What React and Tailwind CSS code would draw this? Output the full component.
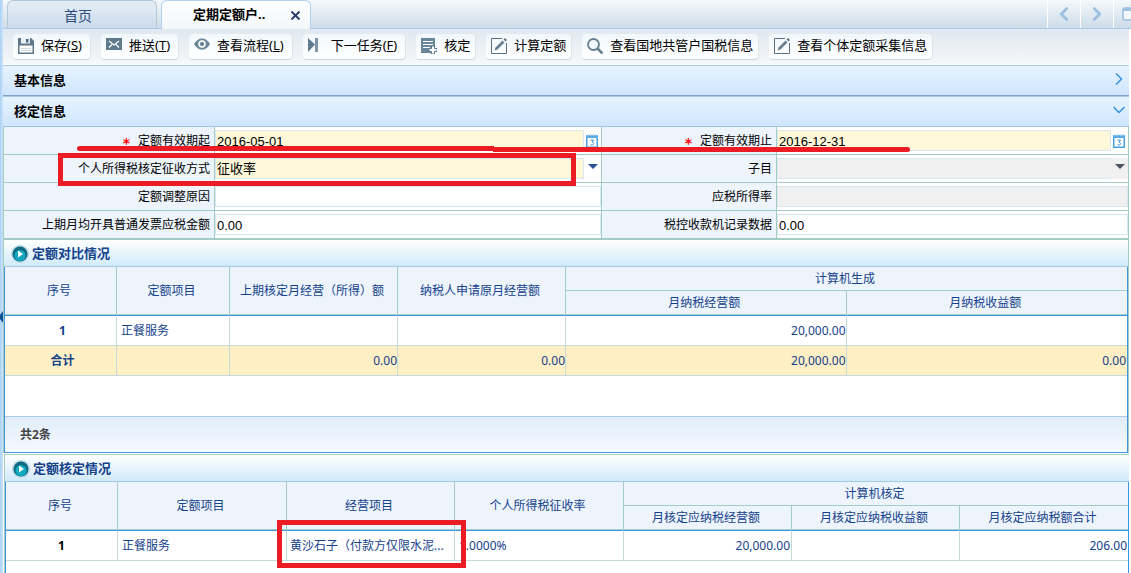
import { ChevronDown, ChevronLeft, ChevronRight } from "lucide-react";

function SaveIcon() {
  return (
    <svg viewBox="0 0 16 16" className="w-4 h-4 shrink-0">
      <path d="M0 0h13l3 3v13H0z" fill="#5f7689" />
      <path d="M1.500 7.500h13v7h-13z" fill="#fff" />
      <path d="M3 0h9v5.500H3z" fill="#e9f1f6" />
      <path d="M8 1h2.500v3.500H8z" fill="#4f677a" />
      <path d="M3 10.500h10M3 12.500h10" stroke="#cfdae2" />
    </svg>
  );
}

function MailIcon() {
  return (
    <svg viewBox="0 0 16 16" className="w-4 h-4 shrink-0">
      <path d="M0 0h16v12H0z" fill="#5f7b8d" />
      <path d="M3 3l5 4 5-4M3 9.500l3-3M13 9.500l-3-3" stroke="#fff" strokeWidth="1.200" fill="none" />
    </svg>
  );
}

function EyeIcon() {
  return (
    <svg viewBox="0 0 16 16" className="w-4 h-4 shrink-0">
      <path d="M0 6C4-1.500 12-1.500 16 6 12 13.500 4 13.500 0 6z" fill="#6a8799" />
      <circle cx="8" cy="6" r="3.800" fill="#fff" />
      <circle cx="8" cy="6" r="2" fill="#5b788b" />
    </svg>
  );
}

function NextIcon() {
  return (
    <svg viewBox="0 0 16 16" className="w-4 h-4 shrink-0">
      <path d="M0 0l7 6.500L0 14z" fill="#5f7b90" />
      <path d="M7 0h3v14H7z" fill="#7d97a8" />
    </svg>
  );
}

function CheckListIcon() {
  return (
    <svg viewBox="0 0 16 16" className="w-4 h-4 shrink-0">
      <path d="M0 0h14v15H0z" fill="#6a8799" />
      <path d="M2 3.500h10M2 6.500h10M2 9.500h7" stroke="#fff" />
      <path d="M10.500 8h3v2.500H16v3h-2.500V16h-3v-2.500H8v-3h2.500z" fill="#fff" stroke="#5f7b90" />
    </svg>
  );
}

function EditIcon() {
  return (
    <svg viewBox="0 0 16 16" className="w-4 h-4 shrink-0">
      <path d="M11 .5H.5v15h15V5" stroke="#5c7282" fill="none" />
      <path d="M3.500 12.500l1-3 7-7 2 2-7 7z" fill="#6b8191" />
      <path d="M12.500 1.500L14 0l2 2-1.500 1.500z" fill="#5c7282" />
    </svg>
  );
}

function SearchIcon() {
  return (
    <svg viewBox="0 0 16 16" className="w-4 h-4 shrink-0">
      <circle cx="6.500" cy="6.500" r="5.500" stroke="#64808f" strokeWidth="1.800" fill="#f2f8fb" />
      <path d="M10.500 10.500l5 5" stroke="#64808f" strokeWidth="2.600" />
    </svg>
  );
}

function CalendarIcon() {
  return (
    <svg viewBox="0 0 12 14" className="w-3 h-3.5 shrink-0">
      <path d="M.75 2.500h10.500v10.750H.75z" fill="#fff" stroke="#4a9fe0" strokeWidth="1.500" />
      <path d="M0 1h12v3H0z" fill="#5aaae6" />
      <path d="M2 0v2M4.500 0v2M7.500 0v2M10 0v2" stroke="#b9dcf5" />
      <path d="M4.500 6h3L6 8.300c2.300 0 2 3-.2 2.700L4.500 10.700" stroke="#3b94dc" fill="none" />
    </svg>
  );
}

function PlayIcon() {
  return (
    <svg viewBox="0 0 18 18" className="w-[18px] h-[18px] shrink-0">
      <circle cx="9" cy="9" r="9" fill="#b9d9e6" />
      <circle cx="9" cy="9" r="7.500" fill="#0d6a80" />
      <circle cx="9" cy="10.500" r="5.500" fill="#12a8bf" />
      <path d="M7 5.500l5 3.500-5 3.500z" fill="#fff" />
    </svg>
  );
}

function Arrow() {
  return (
    <svg viewBox="0 0 10 5" className="w-2.5 h-[5px] shrink-0">
      <path d="M0 0h10L5 5z" fill="currentColor" />
    </svg>
  );
}

const actions = [
  { icon: SaveIcon, label: "保存", hotkey: "S" },
  { icon: MailIcon, label: "推送", hotkey: "T" },
  { icon: EyeIcon, label: "查看流程", hotkey: "L" },
  { icon: NextIcon, label: "下一任务", hotkey: "F" },
  { icon: CheckListIcon, label: "核定" },
  { icon: EditIcon, label: "计算定额" },
  { icon: SearchIcon, label: "查看国地共管户国税信息" },
  { icon: EditIcon, label: "查看个体定额采集信息" },
];

function TabBar() {
  return (
    <nav className="flex h-[29px] border-b border-[#a9c8ec] bg-linear-to-b from-[#f4f9fb] to-[#cddce8] pl-1">
      <button className="w-[150px] mr-1 pr-2 pt-0.5 rounded-t-md border border-b-0 border-[#b4c8dc] bg-linear-to-b from-[#e6eef5] to-[#cbdcec] text-sm text-[#2c4a7c]">
        首页
      </button>
      <div className="flex items-center w-[150px] -mb-px pl-[31px] rounded-t-md border border-b-0 border-[#b3d0f0] bg-linear-to-b from-white to-[#f3f7fa]">
        <button className="text-[13px] font-bold whitespace-nowrap">定期定额户..</button>
        <button aria-label="关闭" className="ml-auto mr-2.5 text-[#2b4270]">
          <svg viewBox="0 0 9 9" className="w-[9px] h-[9px]">
            <path d="M.5.5l8 8M8.500.5l-8 8" stroke="currentColor" strokeWidth="2" />
          </svg>
        </button>
      </div>
      <div className="flex ml-auto text-[#9dbfe0]">
        <button aria-label="向左" className="flex items-center justify-center w-[33px] border-l border-white">
          <ChevronLeft size={22} strokeWidth={3} />
        </button>
        <button aria-label="向右" className="flex items-center justify-center w-[33px] border-l border-white">
          <ChevronRight size={22} strokeWidth={3} />
        </button>
        <button aria-label="窗口" className="flex items-center w-[18px] pl-2 overflow-hidden border-l border-white">
          <svg viewBox="0 0 16 14" className="w-4 h-3.5 shrink-0">
            <rect x="1" y="1" width="14" height="12" rx="2" fill="#f3f8fc" stroke="currentColor" strokeWidth="1.500" />
            <path d="M1 1h14v3H1z" fill="currentColor" />
          </svg>
        </button>
      </div>
    </nav>
  );
}

function Toolbar() {
  return (
    <div className="flex items-center gap-[11px] h-9 pl-2.5 border-b border-white bg-linear-to-b from-[#dfe8f0] to-[#f6f8fa]">
      {actions.map(({ icon: Icon, label, hotkey }) => (
        <button
          key={label}
          className={
            "flex items-center gap-[7px] h-[26px] pl-[5px] rounded-sm bg-linear-to-b from-[#f1f7fb] to-white border-b border-[#d3d7da] shadow-[1px_0_1px_#e0e3e6] text-[13px] text-black whitespace-nowrap " +
            (hotkey ? "pr-2" : "pr-[5px]")
          }
        >
          <Icon />
          <span>
            {label}
            {hotkey && <>(<u>{hotkey}</u>)</>}
          </span>
        </button>
      ))}
    </div>
  );
}

function PanelHeader({ title, open }) {
  const Icon = open ? ChevronDown : ChevronRight;
  return (
    <button
      className={
        "flex items-center justify-between w-full pl-[11px] border-t border-[#a8cbe8] bg-linear-to-b from-[#e7f3ff] to-[#cfe6fd] text-[13px] font-bold text-black " +
        (open ? "h-[30px]" : "h-[31px] border-b border-b-[#7da3c9]")
      }
    >
      {title}
      <Icon size={20} className="mb-1 text-[#3a97e3]" />
    </button>
  );
}

function Label({ id, required, children }) {
  return (
    <label
      htmlFor={id}
      className="flex items-center justify-end h-7 pr-1 border-r border-b border-[#a4ccc4] bg-[#edf4fc] text-xs text-black whitespace-nowrap"
    >
      {required && <span className="mr-2 pt-1 font-['DejaVu_Sans'] text-sm leading-none font-bold text-[#f00]">*</span>}
      {children}
    </label>
  );
}

const control = "flex-1 min-w-0 h-[21px] px-px pt-px border border-[#d9e8f0] text-[13px] text-black outline-none appearance-none font-['Liberation_Sans','Noto_Sans_CJK_SC',sans-serif] ";

function Cell({ last, children }) {
  return (
    <div className={"flex items-center h-7 border-b border-[#a4ccc4] bg-white" + (last ? "" : " border-r")}>
      {children}
    </div>
  );
}

function DateField({ id, value }) {
  return (
    <>
      <input id={id} defaultValue={value} className={control + "bg-[#fef8d9]"} />
      <button aria-label="选择日期" className="flex w-[17px] pt-px pl-0.5">
        <CalendarIcon />
      </button>
    </>
  );
}

function QuotaForm() {
  return (
    <form className="grid grid-cols-[211px_387fr_175px_351fr] border-t border-t-[#9fc6e6] border-b border-b-[#a4ccc4]">
      <Label id="start" required>定额有效期起</Label>
      <Cell><DateField id="start" value="2016-05-01" /></Cell>
      <Label id="end" required>定额有效期止</Label>
      <Cell last><DateField id="end" value="2016-12-31" /></Cell>

      <Label id="method">个人所得税核定征收方式</Label>
      <Cell>
        <select id="method" className={control + "bg-[#fef8d9] leading-[16px]"}>
          <option>征收率</option>
        </select>
        <span className="flex justify-center w-[17px] pb-1 text-[#2a4d94]"><Arrow /></span>
      </Cell>
      <Label id="item">子目</Label>
      <Cell last>
        <select id="item" disabled className={control + "border-r-0 bg-[#f0f0f0] opacity-100"} />
        <span className="flex items-center justify-center w-[17px] h-[21px] pb-1 bg-[#f0f0f0] text-[#4d5560]"><Arrow /></span>
      </Cell>

      <Label id="reason">定额调整原因</Label>
      <Cell><input id="reason" className={control} /></Cell>
      <Label id="rate">应税所得率</Label>
      <Cell last><input id="rate" disabled className={control + "bg-[#f0f0f0]"} /></Cell>

      <Label id="invoice">上期月均开具普通发票应税金额</Label>
      <Cell><input id="invoice" defaultValue="0.00" className={control} /></Cell>
      <Label id="register">税控收款机记录数据</Label>
      <Cell last><input id="register" defaultValue="0.00" className={control} /></Cell>
    </form>
  );
}

function SectionTitle({ children }) {
  return (
    <h2 className="flex items-center gap-[3px] h-[27px] pt-0.5 pl-[7px] border-b border-[#a3cae0] bg-linear-to-b from-white to-[#d0eaf9] text-[13px] font-bold text-[#15428b]">
      <PlayIcon />
      {children}
    </h2>
  );
}

function Th({ className = "", ...props }) {
  return (
    <th
      className={"h-6 py-0 pl-0 pr-[3px] border-b border-[#a4ccc8] bg-[#edf4fc] font-normal " + className}
      {...props}
    />
  );
}

function Td({ className = "", ...props }) {
  return <td className={"p-0 border-b border-[#c3dad8] truncate " + className} {...props} />;
}

const table = "w-full table-fixed border-separate border-spacing-0 text-xs text-[#15428b]";

function CompareTable() {
  return (
    <table className={table}>
      <colgroup>
        <col className="w-[112px]" />
        <col className="w-[113px]" />
        <col className="w-[168px]" />
        <col className="w-[168px]" />
        <col />
        <col />
      </colgroup>
      <thead>
        <tr>
          <Th rowSpan={2} className="border-r">序号</Th>
          <Th rowSpan={2} className="border-r">定额项目</Th>
          <Th rowSpan={2} className="border-r">上期核定月经营（所得）额</Th>
          <Th rowSpan={2} className="border-r">纳税人申请原月经营额</Th>
          <Th colSpan={2}>计算机生成</Th>
        </tr>
        <tr>
          <Th className="border-r">月纳税经营额</Th>
          <Th>月纳税收益额</Th>
        </tr>
      </thead>
      <tbody>
        <tr className="h-[31px] bg-white">
          <Td className="border-r border-t border-t-[#3f96de] text-center font-bold pl-1">1</Td>
          <Td className="border-r border-t border-t-[#3f96de] pl-1">正餐服务</Td>
          <Td className="border-r border-t border-t-[#3f96de]" />
          <Td className="border-r border-t border-t-[#3f96de]" />
          <Td className="border-r border-t border-t-[#3f96de] text-right">20,000.00</Td>
          <Td className="border-t border-t-[#3f96de]" />
        </tr>
        <tr className="h-[30px] bg-[#feefc5]">
          <Td className="border-r text-center font-bold pl-1">合计</Td>
          <Td className="border-r" />
          <Td className="border-r text-right">0.00</Td>
          <Td className="border-r text-right">0.00</Td>
          <Td className="border-r text-right">20,000.00</Td>
          <Td className="text-right pr-px">0.00</Td>
        </tr>
      </tbody>
    </table>
  );
}

function ApprovedTable() {
  return (
    <table className={table}>
      <colgroup>
        <col className="w-[112px]" />
        <col className="w-[169px]" />
        <col className="w-[168px]" />
        <col className="w-[169px]" />
        <col span={3} />
      </colgroup>
      <thead>
        <tr>
          <Th rowSpan={2} className="border-r">序号</Th>
          <Th rowSpan={2} className="border-r">定额项目</Th>
          <Th rowSpan={2} className="border-r">经营项目</Th>
          <Th rowSpan={2} className="border-r">个人所得税征收率</Th>
          <Th colSpan={3}>计算机核定</Th>
        </tr>
        <tr>
          <Th className="border-r">月核定应纳税经营额</Th>
          <Th className="border-r">月核定应纳税收益额</Th>
          <Th>月核定应纳税额合计</Th>
        </tr>
      </thead>
      <tbody>
        <tr className="h-[31px] bg-white">
          <Td className="border-r border-t border-t-[#3f96de] text-center font-bold text-black">1</Td>
          <Td className="border-r border-t border-t-[#3f96de] pl-1">正餐服务</Td>
          <Td className="border-r border-t border-t-[#3f96de] pl-[3px]">黄沙石子（付款方仅限水泥...</Td>
          <Td className="border-r border-t border-t-[#3f96de] pl-1">1.0000%</Td>
          <Td className="border-r border-t border-t-[#3f96de] text-right pr-px">20,000.00</Td>
          <Td className="border-r border-t border-t-[#3f96de]" />
          <Td className="border-t border-t-[#3f96de] text-right pr-px">206.00</Td>
        </tr>
      </tbody>
    </table>
  );
}

// red marker strokes drawn over the page
function Markers() {
  return (
    <div className="pointer-events-none">
      <div className="absolute left-[77px] top-[146px] w-[417px] h-[5px] rounded-l-full bg-[#ed1c24]" />
      <div className="absolute left-[493px] top-[147px] w-[417px] h-[5px] rounded-r-full bg-[#ed1c24]" />
      <div className="absolute left-[58px] top-[153px] w-[518px] h-[33px] border-5 border-[#ed1c24]" />
      <div className="absolute left-[277px] top-[520px] w-[189px] h-12 border-5 border-[#ed1c24]" />
    </div>
  );
}

export default function App() {
  return (
    <div className="relative flex min-h-screen overflow-hidden bg-white font-['Noto_Sans','Noto_Sans_CJK_SC',sans-serif]">
      <aside className="flex items-center w-[3px] shrink-0 overflow-hidden bg-linear-to-r from-[#a9d0f3] to-[#cfe5fa]">
        <button aria-label="展开" className="mt-[60px]">
          <svg viewBox="0 0 3 12" className="w-[3px] h-3">
            <path d="M3 0v12L0 8V4z" fill="#0f4f9c" />
          </svg>
        </button>
      </aside>
      <main className="flex flex-col flex-1 min-w-0">
        <TabBar />
        <div className="flex flex-col flex-1 pr-0.5">
          <Toolbar />
          <PanelHeader title="基本信息" />
          <PanelHeader title="核定信息" open />
          <div className="border-x border-[#a4ccc4]">
            <QuotaForm />
            <SectionTitle>定额对比情况</SectionTitle>
            <div className="border-x border-b border-[#3f96de]">
              <CompareTable />
              <div className="h-10" />
              <div className="flex items-center h-9 pl-[15px] border-t border-[#a9cbea] bg-linear-to-b from-[#e0edf9] to-[#f5faff] text-xs font-bold text-[#444]">
                共2条
              </div>
            </div>
          </div>
          <div className="flex flex-col flex-1 ml-px mt-px border-t border-l border-[#a4ccc4]">
            <SectionTitle>定额核定情况</SectionTitle>
            <div className="flex-1 border-x border-[#3f96de]">
              <ApprovedTable />
            </div>
          </div>
        </div>
      </main>
      <Markers />
    </div>
  );
}
